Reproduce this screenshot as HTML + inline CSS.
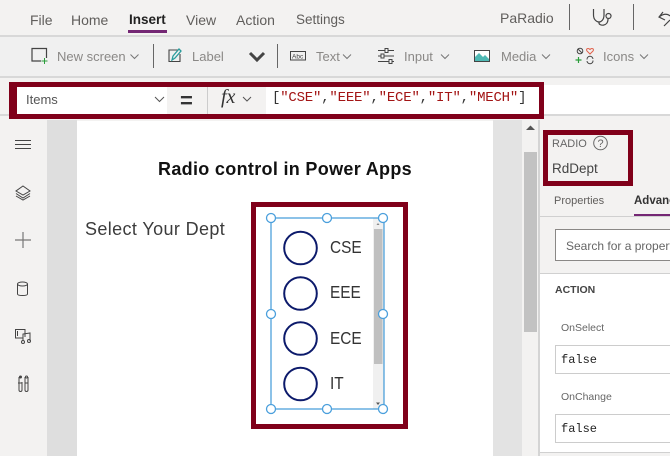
<!DOCTYPE html>
<html>
<head>
<meta charset="utf-8">
<style>
html,body{margin:0;padding:0;}
body{width:670px;height:456px;overflow:hidden;position:relative;background:#f3f2f1;font-family:"Liberation Sans",sans-serif;color:#333;}
.a{position:absolute;}
.t{position:absolute;white-space:nowrap;line-height:1;}
.r{transform:scaleX(.88);transform-origin:left top;font-size:17.500px;color:#333;}
.red{position:absolute;border:5px solid #80001a;box-sizing:border-box;}
svg{position:absolute;left:0;top:0;}
.m{font-size:14px;color:#605e5c;}
.tb{font-size:13px;color:#8a8886;}
.mono{font-family:"Liberation Mono",monospace;}
</style>
</head>
<body>
<!-- top bars -->
<div class="a" style="left:0;top:35px;width:670px;height:2px;background:#d8d8d8"></div>
<div class="a" style="left:0;top:37px;width:670px;height:39px;background:#f0f0f0"></div>
<div class="a" style="left:0;top:76px;width:670px;height:2px;background:#d8d8d8"></div>

<div class="t m" style="left:30px;top:13px">File</div>
<div class="t m" style="left:71px;top:13px">Home</div>
<div class="t" style="left:129px;top:13px;font-size:13.500px;font-weight:bold;color:#222">Insert</div>
<div class="a" style="left:128px;top:30px;width:39px;height:3px;background:#742774"></div>
<div class="t m" style="left:186px;top:13px">View</div>
<div class="t m" style="left:236px;top:13px">Action</div>
<div class="t m" style="left:296px;top:13px;font-size:13.500px">Settings</div>
<div class="t m" style="left:500px;top:11px">PaRadio</div>

<div class="t tb" style="left:57px;top:50px">New screen</div>
<div class="t tb" style="left:192px;top:50px">Label</div>
<div class="t tb" style="left:316px;top:50px">Text</div>
<div class="t tb" style="left:404px;top:50px">Input</div>
<div class="t tb" style="left:501px;top:50px">Media</div>
<div class="t tb" style="left:603px;top:50px">Icons</div>

<!-- formula bar -->
<div class="a" style="left:207px;top:87px;width:59px;height:28px;background:#f3f2f1;border-left:1px solid #ccc;box-sizing:border-box"></div>
<div class="a" style="left:266px;top:85px;width:404px;height:30px;background:#fff"></div>
<div class="a" style="left:0;top:114px;width:670px;height:2px;background:#d8d8d8"></div>
<div class="a" style="left:17px;top:87px;width:150px;height:27px;background:#fff"></div>
<div class="t" style="left:26px;top:93px;font-size:13px;color:#555">Items</div>
<div class="t" style="left:180px;top:90px;font-size:22px;color:#333;font-weight:bold">=</div>
<div class="t" style="left:221px;top:87px;font-size:20px;font-style:italic;font-family:'Liberation Serif',serif;color:#333">fx</div>
<div class="t mono" style="left:272px;top:91px;font-size:14px;letter-spacing:-.2px;color:#333">[<span style="color:#a31515">"CSE"</span>,<span style="color:#a31515">"EEE"</span>,<span style="color:#a31515">"ECE"</span>,<span style="color:#a31515">"IT"</span>,<span style="color:#a31515">"MECH"</span>]</div>
<div class="red" style="left:9px;top:82px;width:535px;height:37px;border-width:5px 5px 5px 8px"></div>

<!-- main -->
<div class="a" style="left:0;top:120px;width:47px;height:336px;background:#f3f2f1"></div>
<div class="a" style="left:47px;top:120px;width:30px;height:336px;background:#dedede"></div>
<div class="a" style="left:77px;top:121px;width:416px;height:335px;background:#fff"></div>
<div class="a" style="left:493px;top:120px;width:29px;height:336px;background:#e3e3e3"></div>
<div class="a" style="left:522px;top:120px;width:16px;height:336px;background:#f3f2f1"></div>
<div class="a" style="left:524px;top:152px;width:13px;height:180px;background:#c2c2c2"></div>
<div class="a" style="left:538px;top:120px;width:2px;height:336px;background:#d4d4d4"></div>

<div class="t" style="left:158px;top:160px;font-size:18px;font-weight:bold;color:#111;letter-spacing:.32px">Radio control in Power Apps</div>
<div class="t" style="left:85px;top:220px;font-size:18px;color:#3c3c3c;letter-spacing:.38px">Select Your Dept</div>

<!-- radio labels -->
<div class="t r" style="left:330px;top:239px">CSE</div>
<div class="t r" style="left:330px;top:284px">EEE</div>
<div class="t r" style="left:330px;top:330px">ECE</div>
<div class="t r" style="left:330px;top:375px">IT</div>

<!-- right panel -->
<div class="t" style="left:552px;top:139px;font-size:11px;color:#666">RADIO</div>
<div class="t" style="left:552px;top:162px;font-size:13.500px;color:#444">RdDept</div>
<div class="t" style="left:554px;top:196px;font-size:11px;color:#605e5c">Properties</div>
<div class="t" style="left:634px;top:196px;font-size:11.500px;font-weight:bold;color:#333">Advanced</div>
<div class="a" style="left:634px;top:214px;width:36px;height:3px;background:#742774"></div>
<div class="a" style="left:540px;top:216px;width:130px;height:1px;background:#d0d0d0"></div>
<div class="a" style="left:555px;top:229px;width:125px;height:32px;background:#fff;border:1px solid #8a8886;box-sizing:border-box"></div>
<div class="t" style="left:566px;top:240px;font-size:12px;color:#666">Search for a property</div>
<div class="a" style="left:540px;top:273px;width:130px;height:1px;background:#d0d0d0"></div>
<div class="a" style="left:540px;top:274px;width:130px;height:178px;background:#fff"></div>
<div class="a" style="left:540px;top:452px;width:130px;height:1px;background:#d0d0d0"></div>
<div class="t" style="left:555px;top:285px;font-size:10.500px;font-weight:bold;color:#444">ACTION</div>
<div class="t" style="left:561px;top:323px;font-size:10.500px;color:#666">OnSelect</div>
<div class="a" style="left:555px;top:345px;width:125px;height:29px;background:#fff;border:1px solid #ccc;box-sizing:border-box"></div>
<div class="t mono" style="left:561px;top:354px;font-size:12px;color:#222">false</div>
<div class="t" style="left:561px;top:392px;font-size:10.500px;color:#666">OnChange</div>
<div class="a" style="left:555px;top:414px;width:125px;height:29px;background:#fff;border:1px solid #ccc;box-sizing:border-box"></div>
<div class="t mono" style="left:561px;top:423px;font-size:12px;color:#222">false</div>
<div class="red" style="left:543px;top:130px;width:90px;height:56px"></div>

<!-- big red box -->
<div class="red" style="left:251px;top:202px;width:157px;height:227px"></div>

<svg width="670" height="456" viewBox="0 0 670 456" fill="none">
<!-- separators -->
<g stroke="#666" stroke-width="1">
<path d="M569.500 4V30M633.500 4V30M153.500 44V68M277.500 44V68"/>
</g>
<!-- stethoscope -->
<path d="M593.500 9V15C593.500 20 597 22 599 22C601 22 604 20 604 15V9" stroke="#444" stroke-width="1.200"/>
<path d="M599 22V23C599 26 608 27 608 19" stroke="#444" stroke-width="1.200"/>
<circle cx="608.500" cy="16" r="2.500" stroke="#444" stroke-width="1.200"/>
<!-- undo -->
<path d="M663 12L659 17L665 20M659 17C664 13 668 14 670 16M664 26L670 20" stroke="#444" stroke-width="1.200"/>
<!-- new screen -->
<path d="M41 61H32V48.500H46.500V58" stroke="#444" stroke-width="1.200"/>
<path d="M44.500 58V64M41.500 61H47.500" stroke="#2a9d3a" stroke-width="1"/>
<!-- chevrons -->
<g stroke="#777" stroke-width="1">
<path d="M130.500 54.500L134.500 58.500L138.500 54.500M343 54.500L347 58.500L351 54.500M441 54.500L445 58.500L449 54.500M542 54.500L546 58.500L550 54.500M640 54.500L644 58.500L648 54.500"/>
</g>
<path d="M250 53L257 60L264 53" stroke="#444" stroke-width="3"/>
<!-- label icon -->
<path d="M178 50H169V61.500H180V54" stroke="#444" stroke-width="1.100"/>
<path d="M172 60L173 56L179 49L181 51L175 58Z" stroke="#2a9d9d" stroke-width="1.300"/>
<!-- text icon -->
<rect x="290.500" y="51.500" width="15" height="8.500" stroke="#444"/>
<text x="292" y="58.500" font-size="6.500" fill="#444" font-family="Liberation Sans">Abc</text>
<!-- input icon -->
<g stroke="#444" stroke-width="1">
<path d="M378 50.500H394M378 56H394M378 61.500H394"/>
</g>
<rect x="385" y="48.500" width="3" height="4" fill="#f0f0f0" stroke="#444"/>
<rect x="381" y="54" width="3" height="4" fill="#f0f0f0" stroke="#444"/>
<rect x="389" y="59.500" width="3" height="4" fill="#f0f0f0" stroke="#444"/>
<!-- media icon -->
<rect x="474.500" y="50.500" width="15" height="11" fill="#fff" stroke="#444"/>
<path d="M475 61V57L479 53L483 57L485 55L489 59V61Z" fill="#4fb9b4"/>
<!-- icons icon -->
<circle cx="580" cy="51" r="2.800" stroke="#444"/>
<path d="M578 49L582 53" stroke="#444"/>
<path d="M590 54L587 51C585.500 49 588 47.500 590 49.500C592 47.500 594.500 49 593 51Z" stroke="#e0604a"/>
<path d="M578.500 57V63M575.500 60H581.500" stroke="#2a9d3a" stroke-width="1.200"/>
<path d="M587 59.500A3 3 0 0 1 593 59M593 60.500A3 3 0 0 1 587 61" stroke="#444"/>
<!-- dropdown chevrons formula -->
<g stroke="#555" stroke-width="1">
<path d="M155 97L159.500 101.500L164 97M243 97L247 101L251 97"/>
</g>
<!-- sidebar icons -->
<g stroke="#444" stroke-width="1">
<path d="M15 140.500H31M15 144.500H31M15 148.500H31"/>
<path d="M23 186L30 191L23 195L16 191Z"/>
<path d="M16 193.500L23 198L30 193.500M16 196L23 200L30 196"/>
</g>
<path d="M23 232V248M15 240H31" stroke="#777" stroke-width="1.200"/>
<g stroke="#444" stroke-width="1">
<ellipse cx="22.500" cy="284" rx="5" ry="2"/>
<path d="M17.500 284V294C17.500 296 27.500 296 27.500 294V284"/>
<path d="M25 337V329.500H15.500V338H23"/>
<path d="M17.500 331V336"/>
<path d="M23 341V334L30 333V341"/>
<circle cx="23" cy="342" r="1.500"/>
<circle cx="29" cy="341" r="1.500"/>
<path d="M19 377H21M19 377V390C19 392 22 392 22 390V382M25 377V390C25 392 28 392 28 390V377M18 383H22M25 383H28"/>
<circle cx="20.500" cy="377" r="1"/>
<circle cx="26.500" cy="377" r="1"/>
</g>
<!-- scroll arrow -->
<path d="M526 130L530.500 125.500L535 130Z" fill="#555"/>
<!-- help icon -->
<circle cx="600.500" cy="143" r="6.800" stroke="#666"/>
<text x="597.500" y="147" font-size="11" fill="#666" font-family="Liberation Sans">?</text>
<!-- radio scrollbar -->
<rect x="373" y="218" width="11" height="191" fill="#f0f0f0"/>
<rect x="374" y="229" width="8.500" height="135" fill="#c0c0c0"/>
<path d="M376.500 225L378 223L379.500 225Z" fill="#888"/>
<path d="M376 402.500H380L378 405Z" fill="#555"/>
<!-- radio circles -->
<g stroke="#0c1a6b" stroke-width="2">
<circle cx="300.500" cy="248" r="16.300"/>
<circle cx="300.500" cy="293.500" r="16.300"/>
<circle cx="300.500" cy="338.500" r="16.300"/>
<circle cx="300.500" cy="384" r="16.300"/>
</g>
<!-- selection -->
<rect x="271" y="218" width="113" height="191" stroke="#1a86d0" stroke-width="1"/>
<g fill="#fff" stroke="#4a9fdc" stroke-width="1.300">
<circle cx="271" cy="218" r="4.500"/>
<circle cx="327" cy="218" r="4.500"/>
<circle cx="383" cy="218" r="4.500"/>
<circle cx="271" cy="314" r="4.500"/>
<circle cx="383" cy="314" r="4.500"/>
<circle cx="271" cy="409" r="4.500"/>
<circle cx="327" cy="409" r="4.500"/>
<circle cx="383" cy="409" r="4.500"/>
</g>
</svg>
</body>
</html>
